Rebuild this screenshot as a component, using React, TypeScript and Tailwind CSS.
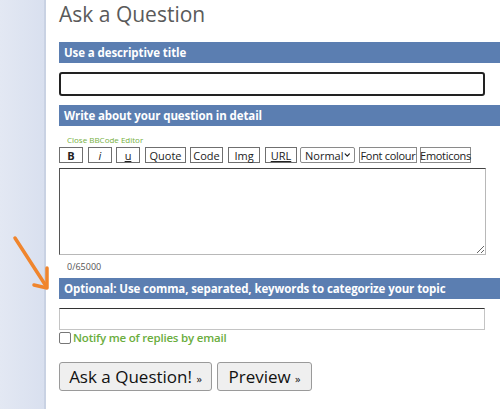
import React from 'react';
import { ChevronDown } from 'lucide-react';

const font = { fontFamily: '"Open Sans", "Noto Sans", Arial, sans-serif' };

function Bar({ children }: { children: React.ReactNode }) {
    return (
        <div className="h-[21px] bg-[#5b7eb1] pl-[5px] flex items-center text-white font-bold text-[11.5px] tracking-[-0.1px]">
            {children}
        </div>
    );
}

function ToolButton({ label, w, className = '' }: { label: React.ReactNode; w: string; className?: string }) {
    return (
        <div className={`h-[16px] shrink-0 whitespace-nowrap border border-[#6f6f6f] bg-white flex items-center justify-center text-[11px] leading-none text-[#222] ${w} ${className}`}>
            {label}
        </div>
    );
}

export default function App() {
    return (
        <div className="relative w-[500px] h-[409px] flex overflow-hidden bg-white" style={font}>
            {/* Left rail */}
            <div className="w-[46px] shrink-0 bg-gradient-to-r from-[#e3e8f3] to-[#d9e0ef] border-r-2 border-[#c9d2e3]" />

            {/* Form */}
            <div className="flex-1 pl-[13px] flex flex-col">
                <h1 className="h-[42px] text-[21px] leading-[28px] text-[#5a5a5a] font-normal">Ask a Question</h1>

                <Bar>Use a descriptive title</Bar>
                <div className="mt-[9px] mr-[15px] h-[24px] border-2 border-[#222] rounded-[3px] bg-white" />

                <div className="mt-[9px]">
                    <Bar>Write about your question in detail</Bar>
                </div>
                <div className="mt-[9px] pl-[8px] text-[8px] leading-[10px] text-[#76b041]">Close BBCode Editor</div>
                <div className="mt-[2px] flex items-center">
                    <ToolButton label={<span className="font-bold">B</span>} w="w-[24px]" />
                    <ToolButton label={<span className="italic">i</span>} w="w-[24px]" className="ml-[5px]" />
                    <ToolButton label={<span className="underline">u</span>} w="w-[24px]" className="ml-[4px]" />
                    <ToolButton label="Quote" w="w-[41px]" className="ml-[5px]" />
                    <ToolButton label="Code" w="w-[33px]" className="ml-[4px]" />
                    <ToolButton label="Img" w="w-[32px]" className="ml-[5px]" />
                    <ToolButton label={<span className="underline">URL</span>} w="w-[32px]" className="ml-[5px]" />
                    <div className="ml-[3px] h-[16px] w-[55px] shrink-0 border border-[#8a8a8a] rounded-[2px] bg-white flex items-center justify-between pl-[4px] pr-[2px] text-[11px] leading-none text-[#222]">
                        Normal
                        <ChevronDown className="w-[10px] h-[10px]" strokeWidth={3.5} />
                    </div>
                    <ToolButton label="Font colour" w="w-[58px]" className="ml-[4px] bg-[#f0f0f0] border-[#8a8a8a] tracking-[-0.3px]" />
                    <ToolButton label="Emoticons" w="w-[51px]" className="ml-[3px] bg-[#f0f0f0] border-[#8a8a8a] tracking-[-0.3px]" />
                </div>
                <textarea
                    className="mt-[5px] mr-[14px] h-[87px] border border-[#b8b8b8] border-t-[#444] border-l-[#555] bg-white resize-y outline-none"
                    readOnly
                />
                <div className="mt-[6px] pl-[8px] text-[9px] leading-[12px] text-[#555]">0/65000</div>

                <div className="mt-[5px]">
                    <Bar>Optional: Use comma, separated, keywords to categorize your topic</Bar>
                </div>
                <div className="mt-[9px] mr-[15px] h-[22px] border border-[#c4c4c4] border-t-[#333] bg-white" />
                <div className="mt-[2px] flex items-center h-[12px]">
                    <span className="w-[12px] h-[12px] border border-[#777] rounded-[2px] bg-white" />
                    <span className="ml-[2px] text-[11.5px] leading-none text-[#6aad3d] font-semibold tracking-[-0.2px]">Notify me of replies by email</span>
                </div>

                <div className="mt-[18px] flex gap-[5px]">
                    <button className="h-[29px] w-[153px] bg-[#efefef] border border-[#9a9a9a] rounded-[3px] text-[17px] leading-none text-[#111]">
                        Ask a Question! <span className="text-[11px]">»</span>
                    </button>
                    <button className="h-[29px] w-[95px] bg-[#efefef] border border-[#9a9a9a] rounded-[3px] text-[17px] leading-none text-[#111]">
                        Preview <span className="text-[11px]">»</span>
                    </button>
                </div>
            </div>

            {/* Orange annotation arrow */}
            <svg className="absolute left-0 top-0 pointer-events-none" width="60" height="300" viewBox="0 0 60 300">
                <g stroke="#f0852d" strokeWidth="3.5" strokeLinecap="round" strokeLinejoin="round" fill="none">
                    <path d="M15 238 L46 286" />
                    <path d="M47 268 L47 288 L34 285" />
                </g>
            </svg>
        </div>
    );
}
